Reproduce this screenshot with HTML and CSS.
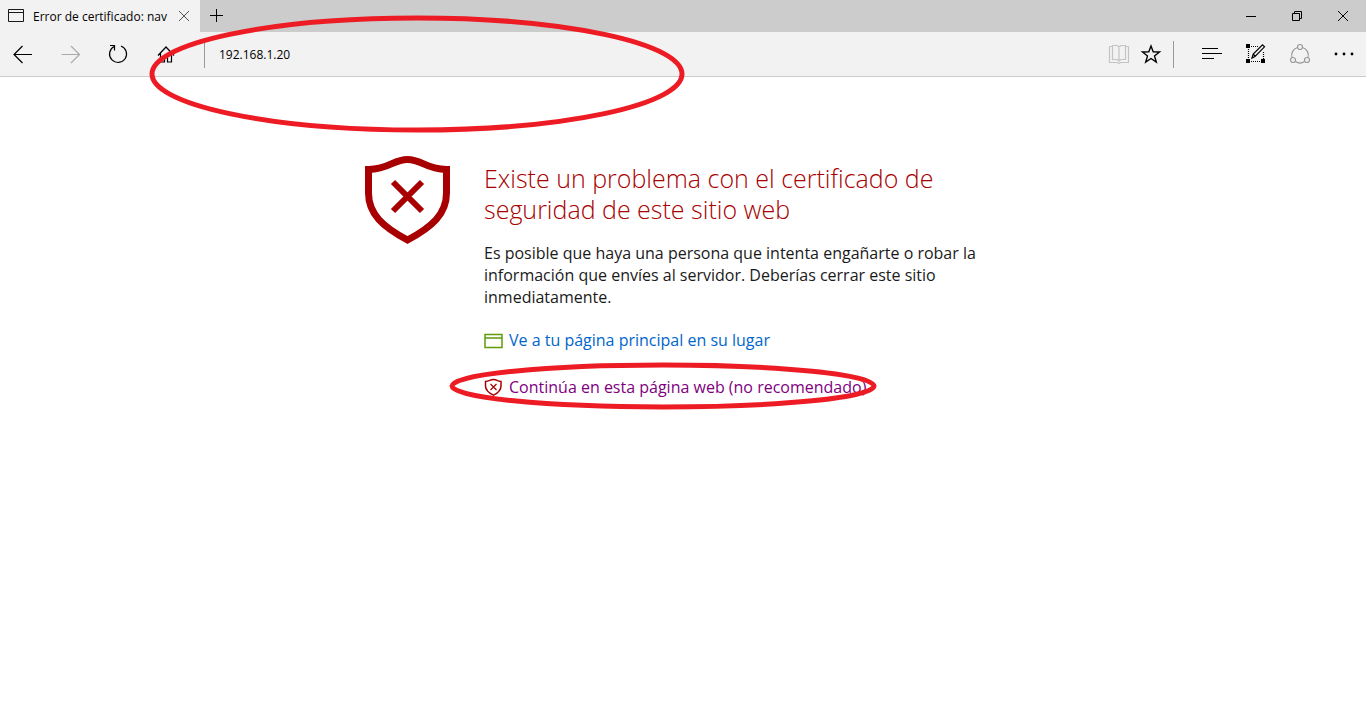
FILE: index.html
```html
<!DOCTYPE html>
<html lang="es">
<head>
  <meta charset="UTF-8" />
  <meta name="viewport" content="width=device-width, initial-scale=1.0"/>
  <title>Error de certificado: navegación bloqueada</title>
  <link rel="stylesheet" href="styles.css">
</head>
<body>
  <!-- Tabs -->
  <div class="tabbar">
    <div class="tab">
      <svg class="tab-icon" width="16" height="14" viewBox="0 0 16 14"><path d="M.5 .5h15v12H.5zM.5 3.5h15" /></svg>
      <span class="tab-title">Error de certificado: nav</span>
      <button class="tab-close" aria-label="Cerrar pestaña">
        <svg width="12" height="12" viewBox="0 0 12 12"><path d="M1 1l10 10M11 1L1 11" /></svg>
      </button>
    </div>
    <button class="new-tab" aria-label="Nueva pestaña">
      <svg width="14" height="14" viewBox="0 0 14 14"><path d="M6.500 0v13M0 6.500h13" /></svg>
    </button>
    <div class="window-buttons">
      <button aria-label="Minimizar"><svg width="12" height="12" viewBox="0 0 12 12"><path d="M1 6.500h10" /></svg></button>
      <button aria-label="Restaurar"><svg width="12" height="12" viewBox="0 0 12 12"><path d="M1.500 3.500h7v7h-7zM3.500 3.500v-2h7v7h-2" /></svg></button>
      <button aria-label="Cerrar"><svg width="12" height="12" viewBox="0 0 12 12"><path d="M1 1l10 10M11 1L1 11" /></svg></button>
    </div>
  </div>

  <!-- Toolbar -->
  <div class="toolbar">
    <button class="nav" aria-label="Atrás"><svg width="20" height="18" viewBox="0 0 20 18"><path d="M9.500 1L1 9.500 9.500 18M1 9.500h18" /></svg></button>
    <button class="nav disabled" aria-label="Adelante"><svg width="20" height="18" viewBox="0 0 20 18"><path d="M11 1l8.500 8.500L11 18M19.500 9.500h-18" /></svg></button>
    <button class="nav" aria-label="Actualizar"><svg width="20" height="20" viewBox="0 0 20 20"><path d="M13 2A8.500 8.500 0 1 1 6 2.500M2 1.500h4.500v5" /></svg></button>
    <button class="nav" aria-label="Inicio"><svg width="18" height="18" viewBox="0 0 18 18"><path d="M1 10.500L9 2l8 8.500M3.500 8.500v8.500h4v-6h3v6h4V8.500" /></svg></button>
    <span class="separator"></span>
    <input class="address" type="text" value="192.168.1.20" aria-label="Dirección" />
    <button class="small disabled book" aria-label="Vista de lectura"><svg width="20" height="20" viewBox="0 0 20 20"><path d="M3.500 2.500h-3v16h8l1.500 1 1.500-1h8v-16h-3M3.500 1.500H8l2 1.500 2-1.500h4.500v14H12L10 17l-2-1.500H3.500zM10 3v14" /></svg></button>
    <button class="small star" aria-label="Favoritos"><svg width="20" height="20" viewBox="0 0 20 20"><path d="M10 2l2.200 5.800 6.300.2-5 3.900 1.800 6.100L10 14.500 4.700 18l1.800-6.100-5-3.900 6.300-.2z" /></svg></button>
    <span class="separator"></span>
    <div class="actions">
      <button aria-label="Centro"><svg width="20" height="12" viewBox="0 0 20 12"><path d="M0 .5h16M0 5.500h20M0 10.500h12" /></svg></button>
      <button aria-label="Crear nota web">
        <svg width="20" height="20" viewBox="0 0 20 20">
          <path class="dashed" d="M5 2.500h8M2.500 5v10M5 17.500h10M17.500 8v7" />
          <path class="dot" d="M0 0h4v4H0zM0 15h4v4H0zM15 15h4v4h-4z" />
          <path d="M6 14l1.200-4L16.500.8l2 2-9.500 9.700zM7.200 10l2.300 2.500" />
        </svg>
      </button>
      <button class="share" aria-label="Compartir">
        <svg width="20" height="20" viewBox="0 0 20 20">
          <path d="M7.500 3.500A8 8 0 0 0 2 13.500M12.500 3.500a8 8 0 0 1 5.500 10M5.500 17.500a8 8 0 0 0 9 0" />
          <circle cx="10" cy="3" r="2.500" /><circle cx="3" cy="16" r="2.500" /><circle cx="17" cy="16" r="2.500" />
        </svg>
      </button>
      <button aria-label="Más"><svg width="20" height="4" viewBox="0 0 20 4"><circle class="dot" cx="2" cy="2" r="1.400" /><circle class="dot" cx="10" cy="2" r="1.400" /><circle class="dot" cx="18" cy="2" r="1.400" /></svg></button>
    </div>
    <svg class="ring ring-address" width="536" height="118" viewBox="0 0 536 118"><ellipse cx="268" cy="59" rx="265" ry="56" /></svg>
  </div>

  <!-- Error page -->
  <main class="error">
    <svg class="shield" width="86" height="90" viewBox="0 0 86 90">
      <path d="M3.500 14.500C25 14 28 4.500 42.500 4.500S60 14 81.500 14.500V38C81.500 59 67 72 42.500 85 18 72 3.500 59 3.500 38z" />
      <path class="cross" d="M28 27l29 29M57 27L28 56" />
    </svg>
    <div class="message">
      <h1>Existe un problema con el certificado de seguridad de este sitio web</h1>
      <p>Es posible que haya una persona que intenta engañarte o robar la información que envíes al servidor. Deberías cerrar este sitio inmediatamente.</p>
      <div class="option">
        <svg class="home-icon" width="19" height="18" viewBox="0 0 19 18"><path d="M1 3.500h17v13H1zM1 7h17" /></svg>
        <a href="#">Ve a tu página principal en su lugar</a>
      </div>
      <div class="option">
        <svg class="shield-icon" width="19" height="18" viewBox="0 0 19 18">
          <path d="M1.500 3.500C5.500 3.300 6 1.500 9.500 1.500s3.500 1.800 7.500 2V8c0 4.500-3 7-7.500 9.200C5 15 1.500 12.500 1.500 8z" />
          <path class="cross" d="M6.500 6l6 6M12.500 6l-6 6" />
        </svg>
        <a class="visited" href="#">Continúa en esta página web (no recomendado)</a>
        <svg class="ring ring-option" width="428" height="48" viewBox="0 0 428 48"><ellipse cx="214" cy="24" rx="211" ry="21" /></svg>
      </div>
    </div>
  </main>
</body>
</html>
```
FILE: styles.css
```css
* { margin: 0; padding: 0; box-sizing: border-box; }
body { min-height: 100vh; background: #fff; color: #1a1a1a; font-family: "Segoe UI", "Open Sans", "Noto Sans", sans-serif; }
button { display: flex; align-items: center; justify-content: center; flex-shrink: 0; background: none; border: none; color: #000; }
svg { display: block; flex-shrink: 0; fill: none; stroke: currentColor; }

/* tabs */
.tabbar { display: flex; height: 32px; background: #ccc; }
.tab { display: flex; align-items: center; width: 200px; padding-left: 8px; background: #f2f2f2; font-size: 12px; }
.tab-title { flex: 1; min-width: 0; margin-left: 9px; white-space: nowrap; color: #000; }
.tab-close { width: 32px; height: 32px; color: #555; }
.new-tab { width: 34px; }
.window-buttons { display: flex; margin-left: auto; }
.window-buttons button { width: 46px; }

/* toolbar */
.toolbar { position: relative; display: flex; align-items: center; height: 45px; background: #f2f2f2; border-bottom: 1px solid #ccc; }
.toolbar button svg { stroke-width: 1.2; overflow: visible; }
.nav { width: 48px; height: 44px; }
.nav:first-child { width: 46px; }
.disabled { color: #aaa; }
.book { color: #c4c4c4; }
.separator { width: 1px; height: 27px; background: #999; }
.nav + .separator { margin-left: 14px; }
.star + .separator { margin-left: 6px; }
.toolbar .star svg { stroke-width: 1.4; }
.address { flex: 1; min-width: 0; height: 30px; padding-left: 14px; border: none; outline: none; background: none; color: #000; font-family: inherit; font-size: 12px; }
.small { width: 32px; height: 44px; }
.actions { display: flex; margin-left: 16px; }
.actions button { width: 44px; height: 44px; }
.actions .share { color: #999; }
.dot { fill: currentColor; stroke: none; }
.dashed { stroke-dasharray: 1 1; }

/* error page */
.error { display: flex; max-width: 636px; margin: 0 auto; padding-top: 78px; }
.shield { margin-right: 33px; color: #a80000; stroke-width: 7; }
.shield .cross { stroke-width: 6; }
.message { flex: 1; padding-top: 8px; }
h1 { color: #a80000; font-size: 25px; font-weight: 300; line-height: 31px; }
p { margin-top: 17px; font-size: 16px; line-height: 22px; }
.option { position: relative; display: flex; align-items: center; gap: 6px; margin-top: 21px; font-size: 16px; line-height: 22px; }
.option + .option { margin-top: 25px; }
.option a { color: #0066cc; text-decoration: none; }
.option a.visited { color: #800080; }
.home-icon { color: #5f9b0a; stroke-width: 1.5; }
.shield-icon { color: #a80000; stroke-width: 1.5; }
.shield-icon .cross { stroke-width: 1.2; }

/* red marks drawn over the window */
.ring { position: absolute; color: #ed1c24; stroke-width: 5; pointer-events: none; }
.ring-address { left: 149px; top: -17px; }
.ring-option { left: -35px; top: -14px; }
```
